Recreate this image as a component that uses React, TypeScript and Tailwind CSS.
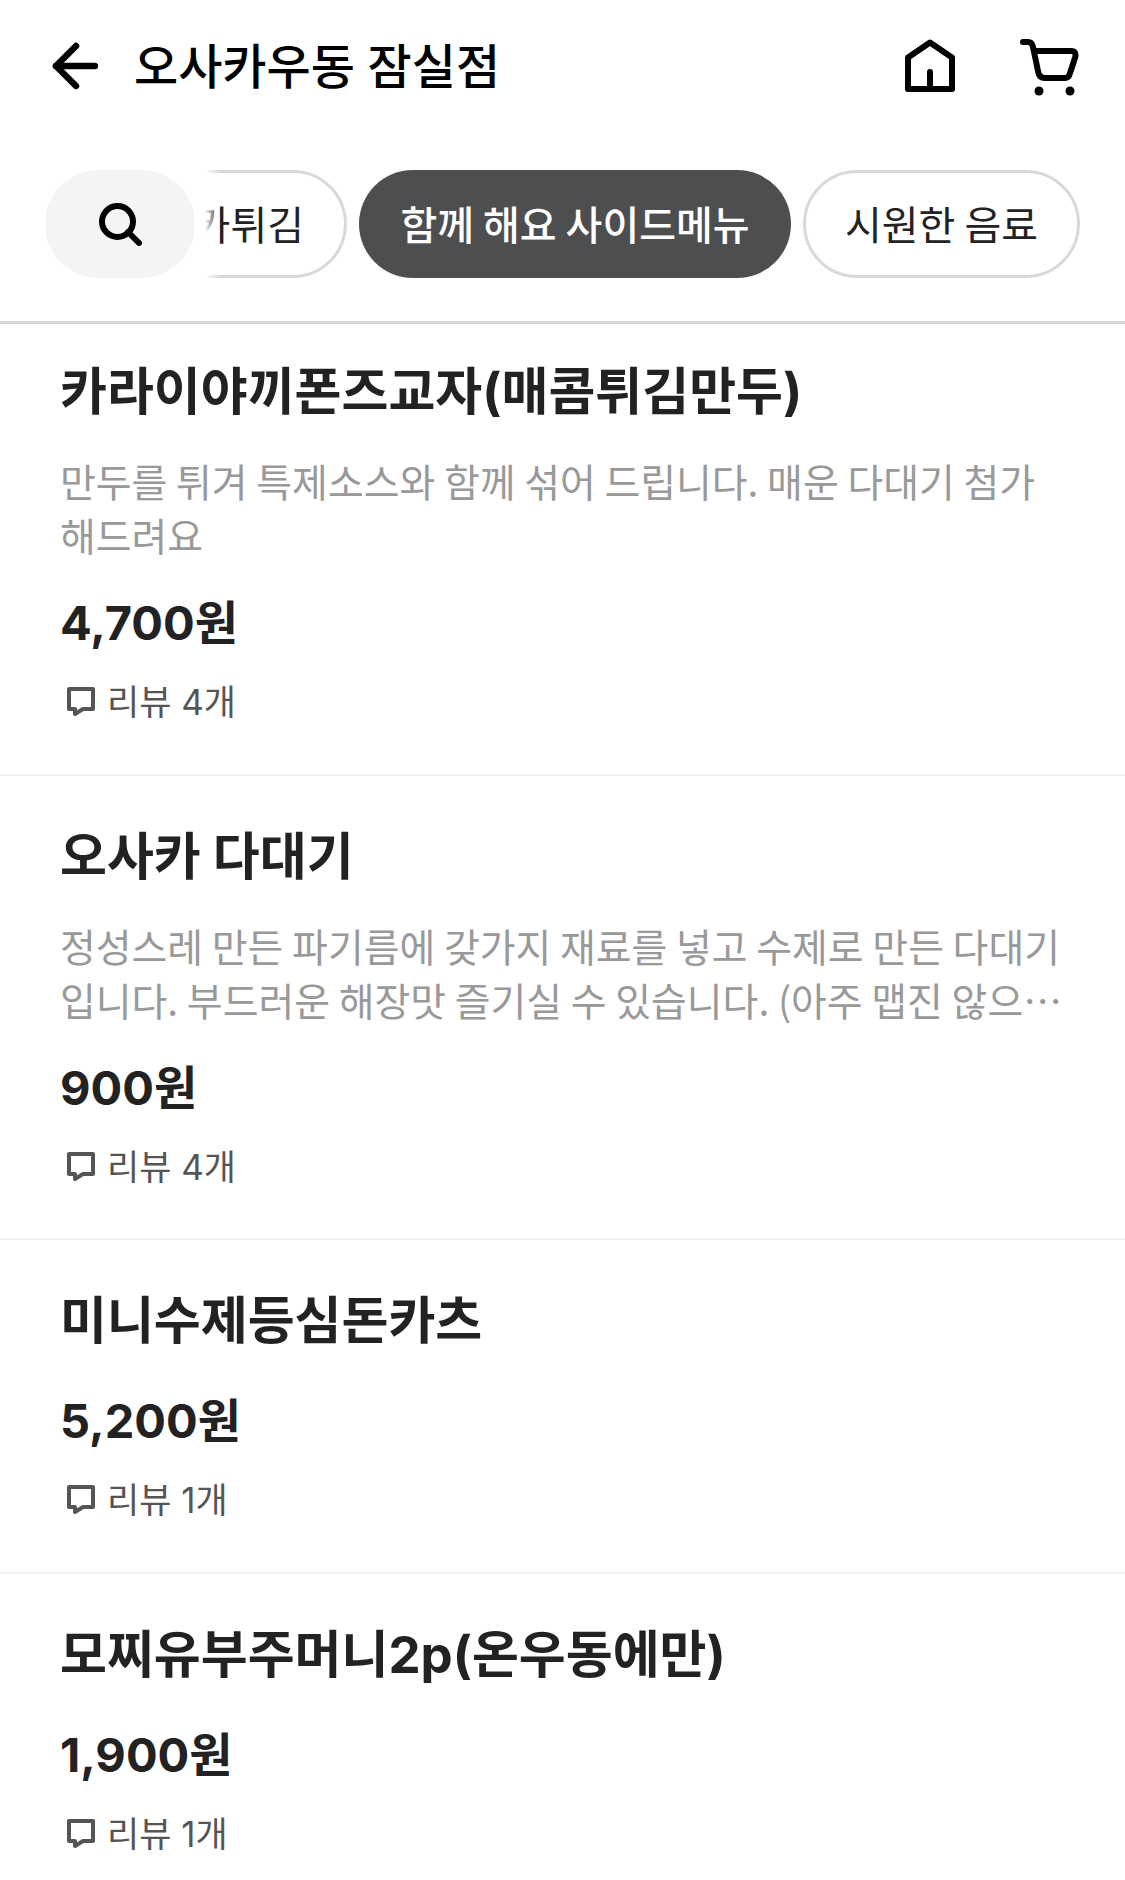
import React from 'react';

const menus = [
  {
    name: '카라이야끼폰즈교자(매콤튀김만두)',
    desc: '만두를 튀겨 특제소스와 함께 섞어 드립니다. 매운 다대기 첨가 해드려요',
    price: '4,700원',
    reviews: '리뷰 4개',
  },
  {
    name: '오사카 다대기',
    desc: '정성스레 만든 파기름에 갖가지 재료를 넣고 수제로 만든 다대기입니다. 부드러운 해장맛 즐기실 수 있습니다. (아주 맵진 않으며 칼칼한 맛이에요)',
    price: '900원',
    reviews: '리뷰 4개',
  },
  { name: '미니수제등심돈카츠', price: '5,200원', reviews: '리뷰 1개' },
  { name: '모찌유부주머니2p(온우동에만)', price: '1,900원', reviews: '리뷰 1개' },
];

const BackIcon = () => (
  <svg width="46" height="48" viewBox="0 0 46 48" fill="none" stroke="#000" strokeWidth="6.5" strokeLinecap="round" strokeLinejoin="round">
    <path d="M24 4 L4 24 L24 44" />
    <path d="M4 24 H43" />
  </svg>
);

const HomeIcon = () => (
  <svg width="50" height="53" viewBox="0 0 50 53" fill="none" stroke="#000" strokeWidth="6" strokeLinejoin="round">
    <path d="M25 3.5 L47 18.5 V50 H3 V18.5 Z" />
    <path d="M25 50 V33" strokeLinecap="round" />
  </svg>
);

const CartIcon = () => (
  <svg width="59" height="57" viewBox="0 0 59 57" fill="none" stroke="#000" strokeWidth="6" strokeLinecap="round" strokeLinejoin="round">
    <path d="M3 3 H8 Q12 3 13 8 L18 32 Q19 39 25 39 H45 Q49 39 50 34 L55 19 Q57 12 51 12 H14" />
    <circle cx="19" cy="52" r="4.5" fill="#000" stroke="none" />
    <circle cx="50" cy="52" r="4.5" fill="#000" stroke="none" />
  </svg>
);

const SearchIcon = () => (
  <svg width="43" height="43" viewBox="0 0 43 43" fill="none" stroke="#000" strokeWidth="6" strokeLinecap="round">
    <circle cx="18.5" cy="18.5" r="15.5" />
    <path d="M29 29 L40 40" />
  </svg>
);

const ReviewIcon = () => (
  <svg width="28" height="30" viewBox="0 0 28 30" fill="none" stroke="#555" strokeWidth="4" strokeLinejoin="round">
    <path d="M2 2 H26 V22 H16 L8 27 V22 H2 Z" />
  </svg>
);

const MenuItem = ({ item, first }: { item: (typeof menus)[number]; first: boolean }) => (
  <div className={`border-b-2 border-[#f3f3f3] pl-[60px] pr-[56px] ${first ? 'pt-[36px]' : 'pt-[49px]'} pb-[47.5px]`}>
    <h2 className="text-[51px] leading-[64px] font-bold text-[#222]">{item.name}</h2>
    {item.desc && (
      <p className="mt-[29px] font-['Noto_Sans_CJK_KR',sans-serif] text-[38.9px] leading-[54px] text-[#999] line-clamp-2">
        {item.desc}
      </p>
    )}
    <div className={`${item.desc ? 'mt-[30px]' : 'mt-[36px]'} text-[47px] leading-[64px] font-bold text-[#222]`}>{item.price}</div>
    <div className="mt-[23px] flex items-center gap-[12px] pl-[7px] text-[35px] leading-[48px] text-[#555]">
      <ReviewIcon />
      <span>{item.reviews}</span>
    </div>
  </div>
);

export default function App() {
  return (
    <div className="h-[1880px] w-[1125px] overflow-hidden bg-white font-['Inter','Noto_Sans_CJK_KR',sans-serif]">
      <header className="flex h-[131px] items-center pl-[52px] pr-[46px]">
        <BackIcon />
        <h1 className="ml-[36px] flex-1 pt-[2px] text-[48px] font-medium text-black">오사카우동 잠실점</h1>
        <HomeIcon />
        <div className="ml-[65px] mt-[4px]">
          <CartIcon />
        </div>
      </header>

      <nav className="relative flex h-[193px] items-center justify-end gap-[12px] overflow-hidden border-b-[3px] border-[#d9d9d9] pb-[4px] pr-[45px] font-['Noto_Sans_CJK_KR',sans-serif] text-[40px]">
        <div className="flex h-[108px] w-[300px] items-center justify-end rounded-full border-[3px] border-[#d9d9d9] pb-[3px] pr-[40px] text-[#222]">
          <span className="whitespace-nowrap">오사카튀김</span>
        </div>
        <div className="flex h-[108px] w-[432px] items-center justify-center rounded-full bg-[#4d4e50] pb-[3px] font-medium text-white">
          함께 해요 사이드메뉴
        </div>
        <div className="flex h-[108px] w-[277px] items-center justify-center rounded-full border-[3px] border-[#d9d9d9] pb-[3px] text-[#222]">
          시원한 음료
        </div>
        {/* fade where the chips scroll under the search button */}
        <div className="absolute left-0 top-0 h-full w-[205px] bg-white" />
        <div className="absolute left-[205px] top-0 h-full w-[15px] bg-gradient-to-r from-white to-transparent" />
        <div className="absolute left-[45px] top-[39px] flex h-[108px] w-[150px] items-center justify-center rounded-full bg-[#f3f4f6]">
          <SearchIcon />
        </div>
      </nav>

      {menus.map((item, i) => (
        <MenuItem key={item.name} item={item} first={i === 0} />
      ))}
    </div>
  );
}
